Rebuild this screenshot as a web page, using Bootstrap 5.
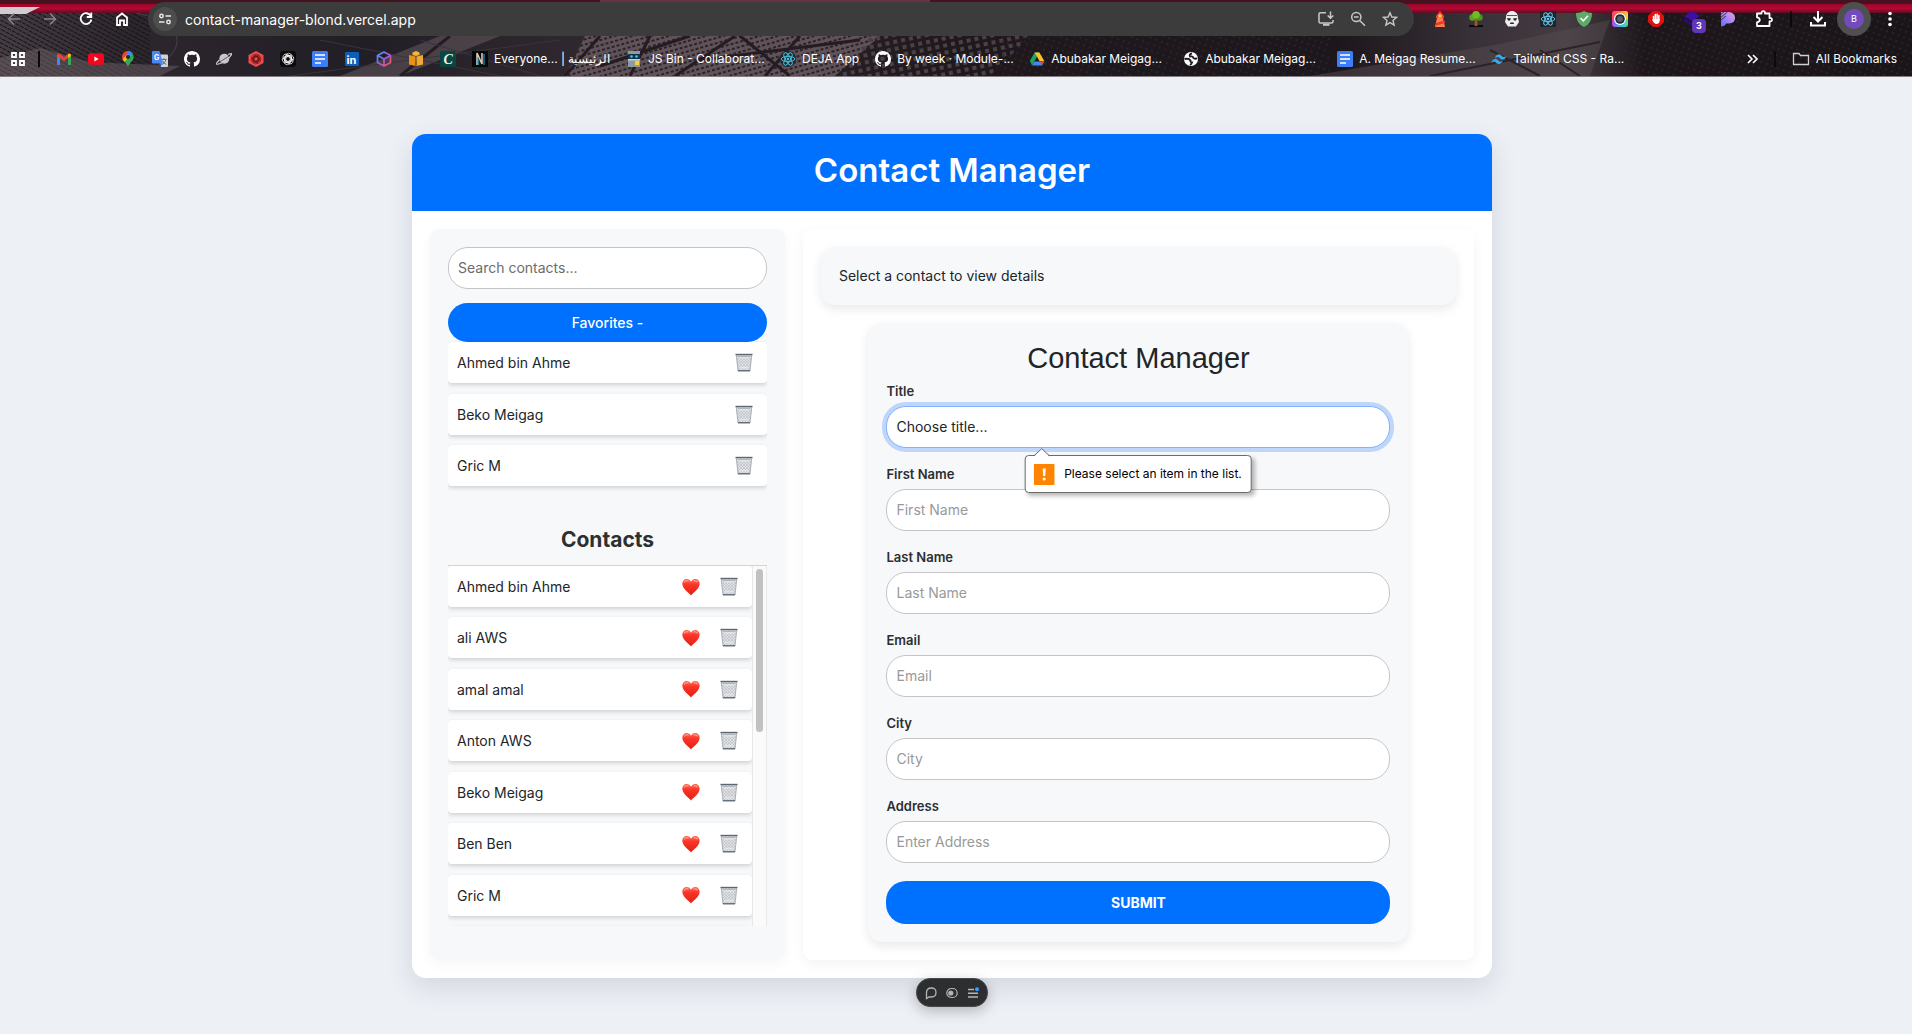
<!DOCTYPE html>
<html lang="en">
<head>
<meta charset="utf-8">
<meta name="viewport" content="width=device-width, initial-scale=1">
<title>Contact Manager</title>
<link href="https://cdn.jsdelivr.net/npm/bootstrap@5.3.0/dist/css/bootstrap.min.css" rel="stylesheet">
<style>
  :root { --brand: #0070ff; --panel: #f7f8fa; --ink: #212529; }
  body { background: #edf0f5; color: var(--ink); font-family: Inter, "Noto Sans", sans-serif; font-size: 14px; line-height: 21px; }
  svg { display: block; flex: none; }

  /* browser chrome */
  .chrome { position: relative; overflow: hidden; background: #1e181e; border-bottom: 1px solid #857c82; color: #fff; }
  .chrome-art { position: absolute; top: 0; left: 0; width: 100%; height: 100%; }
  .chrome-row { position: relative; gap: 8px; }
  .tool-row { height: 38px; padding: 2px 8px 2px 0; }
  .mark-row { height: 38px; padding: 4px 15px 0 10px; gap: 16px; }
  .icon-btn { width: 28px; height: 28px; padding: 0; border: 0; background: none; color: #fff; display: flex; align-items: center; justify-content: center; flex: none; position: relative; }
  .icon-btn.dim { color: #8a838b; }
  .omnibox { height: 34px; border-radius: 17px; background: #3c3c3c; padding: 0 12px 0 5px; margin: 0 4px; gap: 8px; color: #c7c7c7; }
  .site-chip { width: 24px; height: 24px; border: 0; padding: 0; border-radius: 12px; background: #4d4d4d; color: #e8e8e8; display: flex; align-items: center; justify-content: center; flex: none; }
  .url-input { flex: 1; min-width: 0; border: 0; outline: 0; background: none; color: #fff; font-size: 14px; padding: 0; }
  .omni-btn { width: 24px; height: 28px; padding: 0; border: 0; background: none; color: #c7c7c7; display: flex; align-items: center; justify-content: center; }
  .vline { width: 2px; height: 16px; background: #0b090b; flex: none; }
  .count { position: absolute; left: 14px; top: 14px; width: 14px; height: 14px; border-radius: 4px; background: #6136ba; font: bold 9px/14px Inter, sans-serif; color: #fff; text-align: center; }
  .profile { width: 34px; height: 34px; margin: 0 -3px; border-radius: 17px; border: 0; padding: 0; background: #4f4f4f; display: flex; align-items: center; justify-content: center; flex: none; }
  .profile span { width: 20px; height: 20px; border-radius: 10px; background: #724bbd; color: #fff; font-size: 9px; line-height: 20px; }
  .bm { display: flex; align-items: center; gap: 6px; color: #fff; text-decoration: none; font-size: 12px; line-height: 16px; flex: none; }
  .bm.apps-link { gap: 12px; }
  .bm span { white-space: nowrap; }
  .bm .wide { width: 116px; }

  /* page */
  .page { padding: 57px 8px 56px 0; }
  .shell { max-width: 1080px; border-radius: 14px; background: #fff; box-shadow: 0 9px 27px rgba(40,60,90,.14); }
  .shell-head { background: var(--brand); color: #fff; height: 77px; border-radius: 14px 14px 0 0; }
  .shell-head h1 { font-size: 33px; line-height: 40px; font-weight: 600; margin: 0 0 5px; }
  .shell-body { padding: 18px; gap: 18px; }
  .side { flex: 0 0 34%; background: var(--panel); border-radius: 9px; padding: 18px; box-shadow: 0 4px 13px rgba(0,0,0,.04); }
  .detail { flex: 1; min-width: 0; border-radius: 9px; padding: 18px; box-shadow: 0 4px 13px rgba(0,0,0,.05); }
  .field { width: 100%; height: 42px; border: 1px solid #c4c5c8; border-radius: 20px; padding: 0 9px 1px; background: #fff; color: var(--ink); font-size: 14px; line-height: 20px; display: block; appearance: none; outline: 0; }
  .field::placeholder { color: #999; opacity: 1; }
  .side .field::placeholder { color: #6c6c6c; }
  .field.active { border-color: #7fb2ff; box-shadow: 0 0 0 4px #bfd5fa; }
  .fav-btn { width: 100%; height: 39px; border: 0; border-radius: 20px; background: var(--brand); color: #fff; margin-top: 14px; font-weight: 500; }
  .rows { list-style: none; margin: 0; padding: 0; display: flex; flex-direction: column; justify-content: space-between; }
  .rows li { height: 41px; flex: none; background: #fff; border-radius: 4px; padding: 0 14px 0 9px; display: flex; align-items: center; gap: 20px; box-shadow: 0 2px 4px rgba(0,0,0,.16); }
  .rows li > span { flex: 1; }
  .rows button { border: 0; background: none; padding: 0; width: 18px; height: 20px; display: flex; align-items: center; justify-content: center; }
  .fav-rows { height: 144px; overflow-x: clip; }
  .side h2 { font-size: 21px; line-height: 26px; font-weight: 700; color: #2d2f31; margin: 41px 0 12px; text-align: center; }
  .scroller { height: 361px; border-top: 1px solid #d3d3d3; overflow: hidden; }
  .scroller .rows { height: 401px; flex: 1; overflow: hidden; }
  .track { width: 15px; background: #fafafa; border: solid #e8e8e8; border-width: 0 1px; padding: 3px; }
  .thumb { height: 46%; border-radius: 4px; background: #c1c1c1; }
  .info { background: var(--panel); border-radius: 14px; padding: 18px; box-shadow: 0 4px 11px rgba(0,0,0,.09); }
  .info p { margin: 0; line-height: 22px; }
  .form-card { max-width: 540px; margin: 18px auto 0; background: var(--panel); border-radius: 14px; padding: 18px; box-shadow: 0 4px 11px rgba(0,0,0,.09); }
  .form-card h2 { font: 400 29px/34px "Liberation Sans", Arial, sans-serif; margin: 0 0 8px; text-align: center; }
  .form-card label { display: block; font-size: 13px; line-height: 17px; font-weight: 600; color: #2d2f31; margin-bottom: 6px; }
  .group { margin-bottom: 18px; }
  .send { width: 100%; height: 43px; border: 0; border-radius: 20px; background: var(--brand); color: #fff; font-weight: 700; display: block; }
  .bubble { position: absolute; top: 49px; left: 50%; transform: translateX(-50%); height: 38px; display: flex; align-items: center; gap: 9px; padding: 0 9px 0 8px; background: #fff; border: 1px solid #6b6b6b; border-radius: 4px; box-shadow: 3px 3px 4px rgba(0,0,0,.28); color: #000; font-size: 12px; line-height: 16px; white-space: nowrap; z-index: 2; }
  .bubble-tip { position: absolute; left: 8px; top: -8px; }
  .dock-wrap { position: fixed; left: 0; right: 8px; bottom: 27px; pointer-events: none; }
  .dock { height: 29px; border-radius: 14px; background: #2d2e30; border: 1px solid #47494c; box-shadow: 0 4px 14px rgba(0,0,0,.25); padding: 0 6px; gap: 5px; pointer-events: auto; }
  .dock button { width: 16px; height: 20px; border: 0; background: none; padding: 0; color: #b5b5b5; display: flex; align-items: center; justify-content: center; }
</style>
<script src="https://cdn.jsdelivr.net/npm/bootstrap@5.3.0/dist/js/bootstrap.bundle.min.js"></script>
</head>
<body>

<svg width="0" height="0" class="position-absolute" aria-hidden="true">
  <defs>
    <linearGradient id="heartFill" x1="0" y1="0" x2="0" y2="1"><stop offset="0" stop-color="#ff6a55"/><stop offset=".35" stop-color="#fb3427"/><stop offset="1" stop-color="#e02014"/></linearGradient>
    <pattern id="mesh" width="3" height="3" patternUnits="userSpaceOnUse"><rect width="3" height="3" fill="#dddfe2"/><path d="M0 0l3 3M3 0l-3 3" stroke="#bcc0c5" stroke-width=".6"/></pattern>
    <symbol id="heart" viewBox="0 0 18 18"><path d="M9 17.400C7.500 15.200 1 11.500 .4 6.500.1 3 2.300 1 4.800 1 6.700 1 8.300 2.200 9 3.800 9.700 2.200 11.300 1 13.200 1c2.500 0 4.700 2 4.400 5.500C17 11.500 10.500 15.200 9 17.400z" fill="url(#heartFill)"/><path d="M2.200 4.500C2.800 2.700 5 2.100 6.500 3.200M11.300 3.300c1.400-1 3.400-.6 4.200 1" stroke="#ff9d8c" stroke-width="1.200" fill="none"/></symbol>
    <symbol id="bin" viewBox="0 0 18 19"><path d="M1.200 1.500h15.600L15 18H3z" fill="url(#mesh)" stroke="#a4abb2" stroke-width=".9"/><path d="M.5 .8h17v1.400H.5z" fill="#5d6772"/><path d="M3 3.400h12" stroke="#aeb4ba" stroke-width="1"/><path d="M4 5h10M4.600 14.800h9" stroke="#f3f4f5" stroke-width=".8"/><path d="M2.900 17h12.200V18.300H2.900z" fill="#66727e"/></symbol>
    <symbol id="cat" viewBox="0 0 16 16"><path fill="#fff" d="M8 0C3.580 0 0 3.580 0 8c0 3.540 2.290 6.530 5.470 7.590.4.070.55-.17.55-.38 0-.19-.01-.82-.01-1.490-2.010.37-2.530-.49-2.690-.94-.09-.23-.48-.94-.82-1.130-.28-.15-.68-.52-.01-.53.63-.01 1.080.58 1.230.82.72 1.210 1.870.87 2.330.66.070-.52.28-.87.51-1.070-1.780-.2-3.640-.89-3.640-3.950 0-.87.31-1.590.82-2.150-.08-.2-.36-1.020.08-2.120 0 0 .67-.21 2.200.82.64-.18 1.320-.27 2-.27s1.360.09 2 .27c1.530-1.040 2.200-.82 2.200-.82.44 1.100.16 1.920.08 2.120.51.56.82 1.270.82 2.150 0 3.070-1.870 3.750-3.650 3.950.29.25.54.73.54 1.480 0 1.070-.01 1.930-.01 2.200 0 .21.15.46.55.38A8.010 8.010 0 0 0 16 8c0-4.420-3.580-8-8-8z"/></symbol>
    <symbol id="atom" viewBox="0 0 16 16"><g fill="none" stroke="currentColor" stroke-width="1"><ellipse cx="8" cy="8" rx="6.800" ry="2.600"/><ellipse cx="8" cy="8" rx="6.800" ry="2.600" transform="rotate(60 8 8)"/><ellipse cx="8" cy="8" rx="6.800" ry="2.600" transform="rotate(120 8 8)"/></g><circle cx="8" cy="8" r="1.300" fill="currentColor"/></symbol>
    <symbol id="gdoc" viewBox="0 0 16 16"><rect width="16" height="16" rx="1.500" fill="#3f7df6"/><path d="M3 4h10M3 8h10M3 12h6" stroke="#fff" stroke-width="1.700"/></symbol>
    <symbol id="knot" viewBox="0 0 16 16"><g fill="none" stroke="currentColor" stroke-width=".8"><rect x="5.500" y="1.500" width="6.500" height="10.500" rx="3"/><rect x="5.500" y="1.500" width="6.500" height="10.500" rx="3" transform="rotate(60 8 8)"/><rect x="5.500" y="1.500" width="6.500" height="10.500" rx="3" transform="rotate(120 8 8)"/><rect x="5.500" y="1.500" width="6.500" height="10.500" rx="3" transform="rotate(180 8 8)"/><rect x="5.500" y="1.500" width="6.500" height="10.500" rx="3" transform="rotate(240 8 8)"/><rect x="5.500" y="1.500" width="6.500" height="10.500" rx="3" transform="rotate(300 8 8)"/></g></symbol>
  </defs>
</svg>

<header class="chrome">
  <svg class="chrome-art" viewBox="0 0 1912 76" preserveAspectRatio="none" aria-hidden="true">
    <defs>
      <linearGradient id="stripe" x1="0" y1="0" x2="0" y2="1"><stop offset="0" stop-color="#9c052a"/><stop offset=".5" stop-color="#b00a32"/><stop offset=".8" stop-color="#86082a"/><stop offset="1" stop-color="#5a1020"/></linearGradient>
      <linearGradient id="haze" x1="0" y1="0" x2="1" y2="0"><stop offset="0" stop-color="#453d43"/><stop offset=".07" stop-color="#2c262d"/><stop offset=".19" stop-color="#221e26"/><stop offset=".27" stop-color="#2c262c"/><stop offset=".32" stop-color="#30282e"/><stop offset=".5" stop-color="#1f191e"/><stop offset=".7" stop-color="#1c171c"/><stop offset=".77" stop-color="#383137"/><stop offset=".82" stop-color="#453c42"/><stop offset=".86" stop-color="#1d171b"/><stop offset="1" stop-color="#1a1518"/></linearGradient>
      <pattern id="dash" width="5" height="5" patternUnits="userSpaceOnUse" patternTransform="rotate(-16)"><rect width="5" height="5" fill="#5f5258"/><rect y="3" width="3" height="2" fill="#2b2228"/></pattern>
      <pattern id="hatch" width="5" height="4" patternUnits="userSpaceOnUse" patternTransform="rotate(28)"><rect y="1" width="4" height="1" fill="#161217"/></pattern>
      <pattern id="cells" width="8" height="7" patternUnits="userSpaceOnUse" patternTransform="rotate(-12)"><rect x="1" y="1" width="4" height="4" fill="#4a4046"/></pattern>
      <pattern id="dots" width="6" height="6" patternUnits="userSpaceOnUse" patternTransform="rotate(20)"><circle cx="2" cy="2" r="1" fill="#2e272d"/></pattern>
    </defs>
    <rect width="1912" height="76" fill="url(#haze)"/>
    <rect width="150" height="76" fill="url(#hatch)"/>
    <path d="M0 76V58L40 48 90 62 180 66 160 76z" fill="#6b6066" opacity=".5"/>
    <path d="M120 10C190 20 190 50 150 70L60 62" fill="none" stroke="#4b434a"/>
    <path d="M340 76 440 36H500L400 76z" fill="#6b6066" opacity=".5"/>
    <path d="M566 76 585 36H880L835 76z" fill="url(#dash)"/>
    <path d="M840 76 870 36H1030L990 76z" fill="url(#cells)"/>
    <rect x="1000" y="36" width="330" height="40" fill="url(#dots)"/>
    <path d="M400 76 450 36M565 76 600 36M630 76 650 36M600 66 690 36M675 76 735 36M740 36 790 76M765 76 800 36M700 60 860 40" stroke="#241c22" stroke-width="3" fill="none"/>
    <path d="M290 76 560 40M320 40 500 76M420 40 540 76" stroke="#3a333a" fill="none"/>
    <rect x="1600" y="14" width="312" height="62" fill="url(#dots)"/>
    <path d="M1310 76 1500 44 1610 20 1590 76z" fill="#554b52" opacity=".5"/>
    <path d="M1430 76 1600 42M1490 50 1540 76M1540 50 1580 76" stroke="#2a2328" stroke-width="2" fill="none"/>
    <rect width="1912" height="4" fill="#47121f"/>
    <rect x="600" width="330" height="2" fill="#6a3245"/>
    <rect y="4" width="1912" height="9" fill="url(#stripe)"/>
    <path d="M0 7 40 7 26 14 0 14z" fill="#d2cbd0"/>
  </svg>

  <div class="chrome-row tool-row d-flex align-items-center">
    <button class="icon-btn dim" aria-label="Back"><svg width="16" height="16" viewBox="0 0 16 16" fill="none" stroke="currentColor" stroke-width="1.600"><path d="M14 8H3M8 2.500 2.500 8 8 13.500"/></svg></button>
    <button class="icon-btn dim" aria-label="Forward"><svg width="16" height="16" viewBox="0 0 16 16" fill="none" stroke="currentColor" stroke-width="1.600"><path d="M2 8h11M8 2.500 13.500 8 8 13.500"/></svg></button>
    <button class="icon-btn" aria-label="Reload"><svg width="16" height="16" viewBox="0 0 16 16" fill="none" stroke="currentColor" stroke-width="1.800"><path d="M12.800 5A5.400 5.400 0 1 0 13.400 8.500M13.300 1.500V6H8.800"/></svg></button>
    <button class="icon-btn" aria-label="Home"><svg width="16" height="16" viewBox="0 0 16 16" fill="none" stroke="currentColor" stroke-width="1.800"><path d="M3 6.500 8 2.500 13 6.500V14H10V9.500H6V14H3z"/></svg></button>
    <div class="omnibox d-flex align-items-center flex-grow-1">
      <button class="site-chip" aria-label="Site information"><svg width="14" height="14" viewBox="0 0 14 14" fill="none" stroke="currentColor" stroke-width="1.500"><circle cx="3.500" cy="4" r="1.700"/><path d="M7.500 4H13M1 10H6.500"/><circle cx="10.500" cy="10" r="1.700"/></svg></button>
      <input class="url-input" type="text" aria-label="Address" value="contact-manager-blond.vercel.app">
      <button class="omni-btn" aria-label="Install app"><svg width="16" height="16" viewBox="0 0 16 16" fill="none" stroke="currentColor" stroke-width="1.500"><path d="M8 1.800H2.300Q1 1.800 1 3V10.500Q1 12 2.300 12H13.500Q15 12 15 10.500V9M12.500 .5V7M9.700 4.500 12.500 7.200 15.300 4.500"/><path d="M5 13.800h6.500" stroke-width="2"/></svg></button>
      <button class="omni-btn" aria-label="Zoom"><svg width="16" height="16" viewBox="0 0 16 16" fill="none" stroke="currentColor" stroke-width="1.500"><circle cx="6.300" cy="6" r="4.600"/><path d="M9.700 9.500 15 14.700M4 6h4.600"/></svg></button>
      <button class="omni-btn" aria-label="Bookmark this tab"><svg width="16" height="16" viewBox="0 0 16 16" fill="none" stroke="currentColor" stroke-width="1.400"><path d="M8 1.800 9.900 6 14.500 6.400 11 9.500 12.100 14 8 11.600 3.900 14 5 9.500 1.500 6.400 6.100 6z"/></svg></button>
    </div>
    <button class="icon-btn" aria-label="Lighthouse"><svg width="16" height="16" viewBox="0 0 16 16"><path d="M4 5 8 0 12 5V7H4z" fill="#f4442e"/><path d="M5 7h6l2 9H3z" fill="#ff7a52"/><path d="M4 12 12.500 9.500 13 12 3 15z" fill="#e93a25"/><rect x="6.500" y="3.500" width="3" height="3" fill="#ffd34d"/></svg></button>
    <button class="icon-btn" aria-label="Tree"><svg width="16" height="16" viewBox="0 0 16 16"><path d="M1 15h14" stroke="#0c0a0c" stroke-width="2"/><path d="M7 7h2.400L9.500 15H6.500z" fill="#9a5a1e"/><circle cx="4.500" cy="6.500" r="3.200" fill="#58a61c"/><circle cx="11.500" cy="6.500" r="3.200" fill="#4b9614"/><circle cx="8" cy="3.800" r="3.800" fill="#6cbc28"/></svg></button>
    <button class="icon-btn" aria-label="Trooper"><svg width="16" height="16" viewBox="0 0 16 16"><path d="M2 7C2 2 5 0 8 0s6 2 6 7l1 4-3 4.500H4L1 11z" fill="#eee"/><path d="M3 7 7 7.500 6 9.500H4zM13 7 9 7.500l1 2h2zM6.500 11.500h3l.5 1.500H6z" fill="#222"/><path d="M3 4.500h10" stroke="#333" stroke-width=".8"/></svg></button>
    <button class="icon-btn" aria-label="React tools"><svg width="16" height="16" viewBox="0 0 16 16" color="#5fc8ee"><rect width="16" height="16" fill="#20232a"/><use href="#atom"/></svg></button>
    <button class="icon-btn" aria-label="Shield"><svg width="16" height="16" viewBox="0 0 16 16"><path d="M0 2Q5 2 8 0 11 2 16 2C16 9 13 14 8 16 3 14 0 9 0 2z" fill="#5cab66"/><path d="M4.500 7 7.300 9.800 12 4.800" fill="none" stroke="#fff" stroke-width="1.500"/></svg></button>
    <button class="icon-btn" aria-label="Color picker"><svg width="16" height="16" viewBox="0 0 16 16"><defs><linearGradient id="rb" x1="0" y1="1" x2="1" y2="1"><stop offset="0" stop-color="#c43ce8"/><stop offset=".5" stop-color="#35b8f5"/><stop offset="1" stop-color="#4fe08a"/></linearGradient><linearGradient id="rt" x1="0" y1="0" x2="1" y2="0"><stop offset="0" stop-color="#ff3d6e"/><stop offset=".5" stop-color="#ff7a2b"/><stop offset="1" stop-color="#ffd23a"/></linearGradient></defs><rect width="16" height="16" rx="3" fill="url(#rb)"/><path d="M0 8V3Q0 0 3 0H13Q16 0 16 3V8z" fill="url(#rt)"/><circle cx="8" cy="8" r="6" fill="#fff"/><circle cx="8" cy="8" r="4.800" fill="#222b33"/><circle cx="8" cy="8" r="3" fill="#4b6270"/></svg></button>
    <button class="icon-btn" aria-label="Ad blocker"><svg width="16" height="16" viewBox="0 0 16 16"><path d="M5 0h6l5 5v6l-5 5H5l-5-5V5z" fill="#e0120f"/><path d="M5.500 9V5.500M7.300 8V3.500M9.100 8V3.300M10.900 8.500V4.500" stroke="#fff" stroke-width="1.500" stroke-linecap="round"/><path d="M4.800 8H11.700V10Q11 13 8.500 13 6 13 4.300 9z" fill="#fff"/></svg></button>
    <button class="icon-btn" aria-label="Tab stack, 3"><svg width="16" height="16" viewBox="0 0 16 16"><path d="M8 0l8 5-8 5-8-5z" fill="#3c0fa8"/><path d="M0 7l8 5 8-5v3l-8 5.500L0 10z" fill="#2a0a78"/></svg><span class="count">3</span></button>
    <button class="icon-btn" aria-label="Pieces"><svg width="16" height="16" viewBox="0 0 16 16"><defs><linearGradient id="pp" x1="0" y1="1" x2="1" y2="0"><stop offset="0" stop-color="#5f6bf5"/><stop offset=".6" stop-color="#b68cf5"/><stop offset="1" stop-color="#f49fd0"/></linearGradient></defs><path d="M1 1H9Q15 2 15 7T9 12.500H6Q5 15.500 1 15.500z" fill="url(#pp)"/><path d="M0 4 5 0M0 7 7.500 1M1 9 6 5" stroke="#2a1f33" stroke-width=".8"/></svg></button>
    <button class="icon-btn" aria-label="Extensions"><svg width="18" height="18" viewBox="0 0 18 18" fill="none" stroke="currentColor" stroke-width="1.800"><path d="M2 3.500H6.500Q6.300 1.200 8.300 1.200T10 3.500H14.500V8Q17 7.800 17 9.700T14.500 11.500V16H2V12.300Q4.800 11.800 4.800 9.800T2 7.300z" stroke-linejoin="round"/></svg></button>
    <span class="vline mx-1"></span>
    <button class="icon-btn" aria-label="Downloads"><svg width="18" height="18" viewBox="0 0 18 18" fill="none" stroke="currentColor" stroke-width="2"><path d="M9 1V11M4.500 7 9 11.500 13.500 7M2 12V15.500H16V12"/></svg></button>
    <button class="profile" aria-label="Profile"><span>B</span></button>
    <button class="icon-btn" aria-label="Menu"><svg width="16" height="16" viewBox="0 0 16 16" fill="currentColor"><circle cx="8" cy="2.500" r="1.800"/><circle cx="8" cy="8" r="1.800"/><circle cx="8" cy="13.500" r="1.800"/></svg></button>
  </div>

  <nav class="chrome-row mark-row d-flex align-items-center" aria-label="Bookmarks">
    <a class="bm apps-link" href="#" aria-label="Apps"><svg width="16" height="16" viewBox="0 0 16 16" fill="none" stroke="#fff" stroke-width="1.800"><path d="M2 2h4v4H2zM10 2h4v4h-4zM2 10h4v4H2zM10 10h4v4h-4z"/></svg><span class="vline"></span></a>
    <a class="bm" href="#" aria-label="Mail"><svg width="16" height="16" viewBox="0 0 16 16"><path d="M1 14V4h3v10z" fill="#4285f4"/><path d="M12 14V4h3v10z" fill="#34a853"/><path d="M1 4.500V3.500Q2 1.800 4 3l4 3.200L12 3v4L8 10 1 5z" fill="#ea4335"/><path d="M12 3q2-1.200 3 .5V5L12 7.200z" fill="#fbbc04"/></svg></a>
    <a class="bm" href="#" aria-label="Videos"><svg width="16" height="16" viewBox="0 0 16 16"><rect y="2.300" width="16" height="11.400" rx="2.800" fill="#f5061f"/><path d="M6.400 5.600 10.600 8 6.400 10.400z" fill="#fff"/></svg></a>
    <a class="bm" href="#" aria-label="Maps"><svg width="16" height="16" viewBox="0 0 16 16"><path d="M8 0a6 6 0 0 1 5.700 6.200C13.500 10 9.500 11 8 16 7.300 13 4 11 2.500 8z" fill="#34a853"/><path d="M8 0C4.500 0 2 2.700 2 6l.6 2.200L8 2.500z" fill="#ea4335"/><path d="M2.600 8.200 4.500 11 11 4 8 2.500z" fill="#fbbc04"/><path d="M8 0q3 0 4.800 2.500L9 6 6.500 3z" fill="#4285f4"/><circle cx="8" cy="6" r="2.100" fill="#1f2c3d"/></svg></a>
    <a class="bm" href="#" aria-label="Translate"><svg width="16" height="16" viewBox="0 0 16 16"><path d="M6 3.500h9Q16 3.500 16 4.500V15q0 1-1 1H9z" fill="#cfd2d6"/><path d="M9.500 8.500h5M12 7v1.500M14 8.500q-1 4-4 5M10.300 9.500q1.500 3 4 4" stroke="#5f7385" fill="none"/><path d="M7 12.500h3L8.500 16z" fill="#2b59c4"/><path d="M1 0h6.500L11 12.500H1q-1 0-1-1V1Q0 0 1 0z" fill="#4d86f0"/><text x="2" y="8.500" font-family="Inter" font-size="7" font-weight="700" fill="#fff">G</text></svg></a>
    <a class="bm" href="#" aria-label="Code host"><svg width="16" height="16"><use href="#cat"/></svg></a>
    <a class="bm" href="#" aria-label="Planet"><svg width="16" height="16" viewBox="0 0 16 16"><circle cx="8.300" cy="7.800" r="5" fill="#c9c6c9"/><path d="M12 3.500Q17 1.500 15.200 4.200 10.500 11 2.500 13 -1 14 1 11.500L3.500 9" fill="none" stroke="#c9c6c9" stroke-width="1.200"/><path d="M3 11.300 13.300 5" stroke="#3b343b" stroke-width=".7"/></svg></a>
    <a class="bm" href="#" aria-label="Assistant"><svg width="16" height="16" viewBox="0 0 16 16" color="#5d1215"><path d="M8 0l7.500 4v8L8 16 .5 12V4z" fill="#ee4b4b"/><svg x="2" y="2" width="12" height="12"><use href="#knot"/></svg></svg></a>
    <a class="bm" href="#" aria-label="Chat"><svg width="16" height="16" viewBox="0 0 16 16" color="#fff"><rect width="16" height="16" rx="3" fill="#0a0a0a"/><svg x="1" y="1" width="14" height="14"><use href="#knot"/></svg></svg></a>
    <a class="bm" href="#" aria-label="Docs"><svg width="16" height="16"><use href="#gdoc"/></svg></a>
    <a class="bm" href="#" aria-label="Network"><svg width="16" height="16" viewBox="0 0 16 16"><rect x="1" y="1" width="14" height="14" rx="1" fill="#0a5fbe"/><text x="2.500" y="12.500" font-family="Inter" font-size="11" font-weight="700" fill="#fff">in</text></svg></a>
    <a class="bm" href="#" aria-label="Cube"><svg width="16" height="16" viewBox="0 0 16 16"><defs><linearGradient id="cb" x1="0" y1="0" x2="1" y2="1"><stop offset="0" stop-color="#29a9f4"/><stop offset=".5" stop-color="#a457e8"/><stop offset="1" stop-color="#fb5a3c"/></linearGradient></defs><path d="M8 1 14.500 4.500v7L8 15 1.500 11.500v-7zM1.500 4.500 8 8l6.500-3.500M8 8v7" fill="none" stroke="url(#cb)" stroke-width="1.700" stroke-linejoin="round"/></svg></a>
    <a class="bm" href="#" aria-label="Cloud"><svg width="16" height="16" viewBox="0 0 16 16"><path d="M8 0l3.500 1.500V4L8 5 4.500 4V1.500z" fill="#f5b536"/><path d="M1 4l6.500 1.500V15L1 13.500z" fill="#e59417"/><path d="M15 4 8.500 5.500V15L15 13.500z" fill="#f3a92c"/></svg></a>
    <a class="bm" href="#" aria-label="Course"><svg width="16" height="16" viewBox="0 0 16 16"><rect width="16" height="16" rx="2" fill="#09463f"/><text x="3.500" y="13" font-family="Liberation Serif" font-size="14" font-style="italic" font-weight="700" fill="#e8f3ee">C</text></svg></a>
    <a class="bm" href="#"><svg width="16" height="16" viewBox="0 0 16 16"><rect width="16" height="16" fill="#050607"/><path d="M5 14V2l5 11V2" fill="none" stroke="#d8cbb8" stroke-width="1.600"/><path d="M6.500 14V8M12 14V3" stroke="#147c9e" stroke-width="1.500"/></svg><span class="wide text-end">Everyone... | الرئيسية</span></a>
    <a class="bm" href="#"><svg width="16" height="16" viewBox="0 0 16 16"><path d="M2 0h12v16H2z" fill="#8d9aa3"/><path d="M2 3h12v5H2z" fill="#123447"/><circle cx="5.500" cy="5.500" r="1.300" fill="#4fc3e8"/><circle cx="10.500" cy="5.500" r="1.300" fill="#4fc3e8"/><path d="M2 8h12v1.500H2z" fill="#c8d0d4"/><path d="M9 10h4v4H9z" fill="#f8d12c"/></svg><span class="wide">JS Bin - Collaborat...</span></a>
    <a class="bm" href="#"><svg width="16" height="16" color="#43c0dc"><circle cx="8" cy="8" r="8" fill="#23272c"/><use href="#atom"/></svg><span>DEJA App</span></a>
    <a class="bm" href="#"><svg width="16" height="16"><use href="#cat"/></svg><span class="wide">By week · Module-...</span></a>
    <a class="bm" href="#"><svg width="16" height="16" viewBox="0 0 16 16"><path d="M5.600 1.500h4.800L5.200 10.500 3 14 .8 10z" fill="#1ea362"/><path d="M5.600 1.500h4.800L15.300 10H10.500z" fill="#fbc02d"/><path d="M3 14.500 5.300 10.500H15.300L13 14.500z" fill="#4285f4"/><path d="M11 10.500h4.300L13 14.300z" fill="#ea4335"/></svg><span class="wide">Abubakar Meigag...</span></a>
    <a class="bm" href="#"><svg width="16" height="16" viewBox="0 0 16 16"><circle cx="8" cy="8" r="7" fill="#fff"/><path d="M9 2.500Q6 3 7 5.500q3-.5 3.500 1.500 2 1.500 3.500 0M1.500 8Q6 7 7.500 9.500 7 11 9 11.500 8.500 13 7 14" fill="none" stroke="#221c22" stroke-width="1.900"/></svg><span class="wide">Abubakar Meigag...</span></a>
    <a class="bm" href="#"><svg width="16" height="16"><use href="#gdoc"/></svg><span class="wide">A. Meigag Resume...</span></a>
    <a class="bm" href="#"><svg width="16" height="16" viewBox="0 0 16 16"><path d="M4 7.500Q5 3 8.700 3.400C10.500 3.700 11 6 13 6q1.500 0 2.500-1.500Q14.500 8.500 11 8.400C9 8.200 8.500 6 6.500 6Q5 6 4 7.500zM.3 12Q1.300 7.600 5 8c1.800.2 2.300 2.600 4.300 2.600q1.500 0 2.500-1.600Q10.700 13.200 7.300 13C5.200 12.800 4.700 10.500 2.800 10.500q-1.500 0-2.500 1.500z" fill="#38a9f0"/></svg><span>Tailwind CSS - Ra...</span></a>
    <a class="bm ms-auto" href="#" aria-label="More bookmarks"><svg width="12" height="12" viewBox="0 0 12 12" fill="none" stroke="#fff" stroke-width="1.600"><path d="M2 2l4 4-4 4M7 2l4 4-4 4"/></svg></a>
    <span class="vline"></span>
    <a class="bm" href="#"><svg width="18" height="16" viewBox="0 0 18 16" fill="none" stroke="#cfcfcf" stroke-width="1.300"><path d="M1.500 2.500H7L8.500 4.500H16.500V13.500H1.500z"/></svg><span>All Bookmarks</span></a>
  </nav>
</header>

<main class="page">
  <div class="shell mx-auto">
    <div class="shell-head d-flex align-items-center justify-content-center"><h1>Contact Manager</h1></div>
    <div class="shell-body d-flex">
      <aside class="side">
        <input class="field" type="search" placeholder="Search contacts..." aria-label="Search contacts">
        <button class="fav-btn" type="button">Favorites -</button>
        <ul class="rows fav-rows">
          <li><span>Ahmed bin Ahme</span><button aria-label="Delete"><svg width="18" height="19"><use href="#bin"/></svg></button></li>
          <li><span>Beko Meigag</span><button aria-label="Delete"><svg width="18" height="19"><use href="#bin"/></svg></button></li>
          <li><span>Gric M</span><button aria-label="Delete"><svg width="18" height="19"><use href="#bin"/></svg></button></li>
        </ul>
        <h2>Contacts</h2>
        <div class="scroller d-flex">
          <ul class="rows">
            <li><span>Ahmed bin Ahme</span><button aria-label="Favorite"><svg width="18" height="18"><use href="#heart"/></svg></button><button aria-label="Delete"><svg width="18" height="19"><use href="#bin"/></svg></button></li>
            <li><span>ali AWS</span><button aria-label="Favorite"><svg width="18" height="18"><use href="#heart"/></svg></button><button aria-label="Delete"><svg width="18" height="19"><use href="#bin"/></svg></button></li>
            <li><span>amal amal</span><button aria-label="Favorite"><svg width="18" height="18"><use href="#heart"/></svg></button><button aria-label="Delete"><svg width="18" height="19"><use href="#bin"/></svg></button></li>
            <li><span>Anton AWS</span><button aria-label="Favorite"><svg width="18" height="18"><use href="#heart"/></svg></button><button aria-label="Delete"><svg width="18" height="19"><use href="#bin"/></svg></button></li>
            <li><span>Beko Meigag</span><button aria-label="Favorite"><svg width="18" height="18"><use href="#heart"/></svg></button><button aria-label="Delete"><svg width="18" height="19"><use href="#bin"/></svg></button></li>
            <li><span>Ben Ben</span><button aria-label="Favorite"><svg width="18" height="18"><use href="#heart"/></svg></button><button aria-label="Delete"><svg width="18" height="19"><use href="#bin"/></svg></button></li>
            <li><span>Gric M</span><button aria-label="Favorite"><svg width="18" height="18"><use href="#heart"/></svg></button><button aria-label="Delete"><svg width="18" height="19"><use href="#bin"/></svg></button></li>
            <li></li>
          </ul>
          <div class="track"><div class="thumb"></div></div>
        </div>
      </aside>

      <section class="detail">
        <div class="info"><p>Select a contact to view details</p></div>
        <form class="form-card" novalidate>
          <h2>Contact Manager</h2>
          <div class="group">
            <label for="title">Title</label>
            <div class="position-relative">
              <select id="title" class="field active"><option>Choose title...</option><option>Mr</option><option>Mrs</option></select>
              <div class="bubble" role="alert">
                <svg class="bubble-tip" width="16" height="9" viewBox="0 0 16 9"><path d="M0 9 8 .7 16 9z" fill="#fff"/><path d="M0 8 8 .7 16 8" fill="none" stroke="#6b6b6b"/></svg>
                <svg width="21" height="21" viewBox="0 0 21 21"><rect width="21" height="21" rx="1" fill="#ff8500"/><path d="M9 4.500h3l-.4 7.500H9.400z" fill="#fff"/><circle cx="10.500" cy="15" r="1.600" fill="#fff"/></svg>
                <span>Please select an item in the list.</span>
              </div>
            </div>
          </div>
          <div class="group"><label for="first">First Name</label><input id="first" class="field" type="text" placeholder="First Name"></div>
          <div class="group"><label for="last">Last Name</label><input id="last" class="field" type="text" placeholder="Last Name"></div>
          <div class="group"><label for="email">Email</label><input id="email" class="field" type="email" placeholder="Email"></div>
          <div class="group"><label for="city">City</label><input id="city" class="field" type="text" placeholder="City"></div>
          <div class="group"><label for="address">Address</label><input id="address" class="field" type="text" placeholder="Enter Address"></div>
          <button class="send" type="submit">SUBMIT</button>
        </form>
      </section>
    </div>
  </div>
</main>

<div class="dock-wrap d-flex justify-content-center">
  <div class="dock d-flex align-items-center">
    <button aria-label="Comment"><svg width="12" height="14" viewBox="0 0 12 14" fill="none" stroke="currentColor" stroke-width="1.300"><path d="M1.500 12.500V6.500Q1.500 2 6.300 2T11 6.500 6.500 11H4z"/></svg></button>
    <button aria-label="Draft mode"><svg width="12" height="12" viewBox="0 0 12 12" fill="none" stroke="currentColor" stroke-width="1.200"><rect x=".8" y="1.500" width="10.400" height="9" rx="4.500"/><circle cx="4.800" cy="6" r="2" fill="currentColor"/></svg></button>
    <button aria-label="Menu"><svg width="12" height="14" viewBox="0 0 12 14" fill="none" stroke="currentColor" stroke-width="1.400"><path d="M1 3.500h6M1 7.200h10M1 11h10"/><circle cx="10" cy="3.300" r="2" fill="#3b9bff" stroke="none"/></svg></button>
  </div>
</div>
</body>
</html>
